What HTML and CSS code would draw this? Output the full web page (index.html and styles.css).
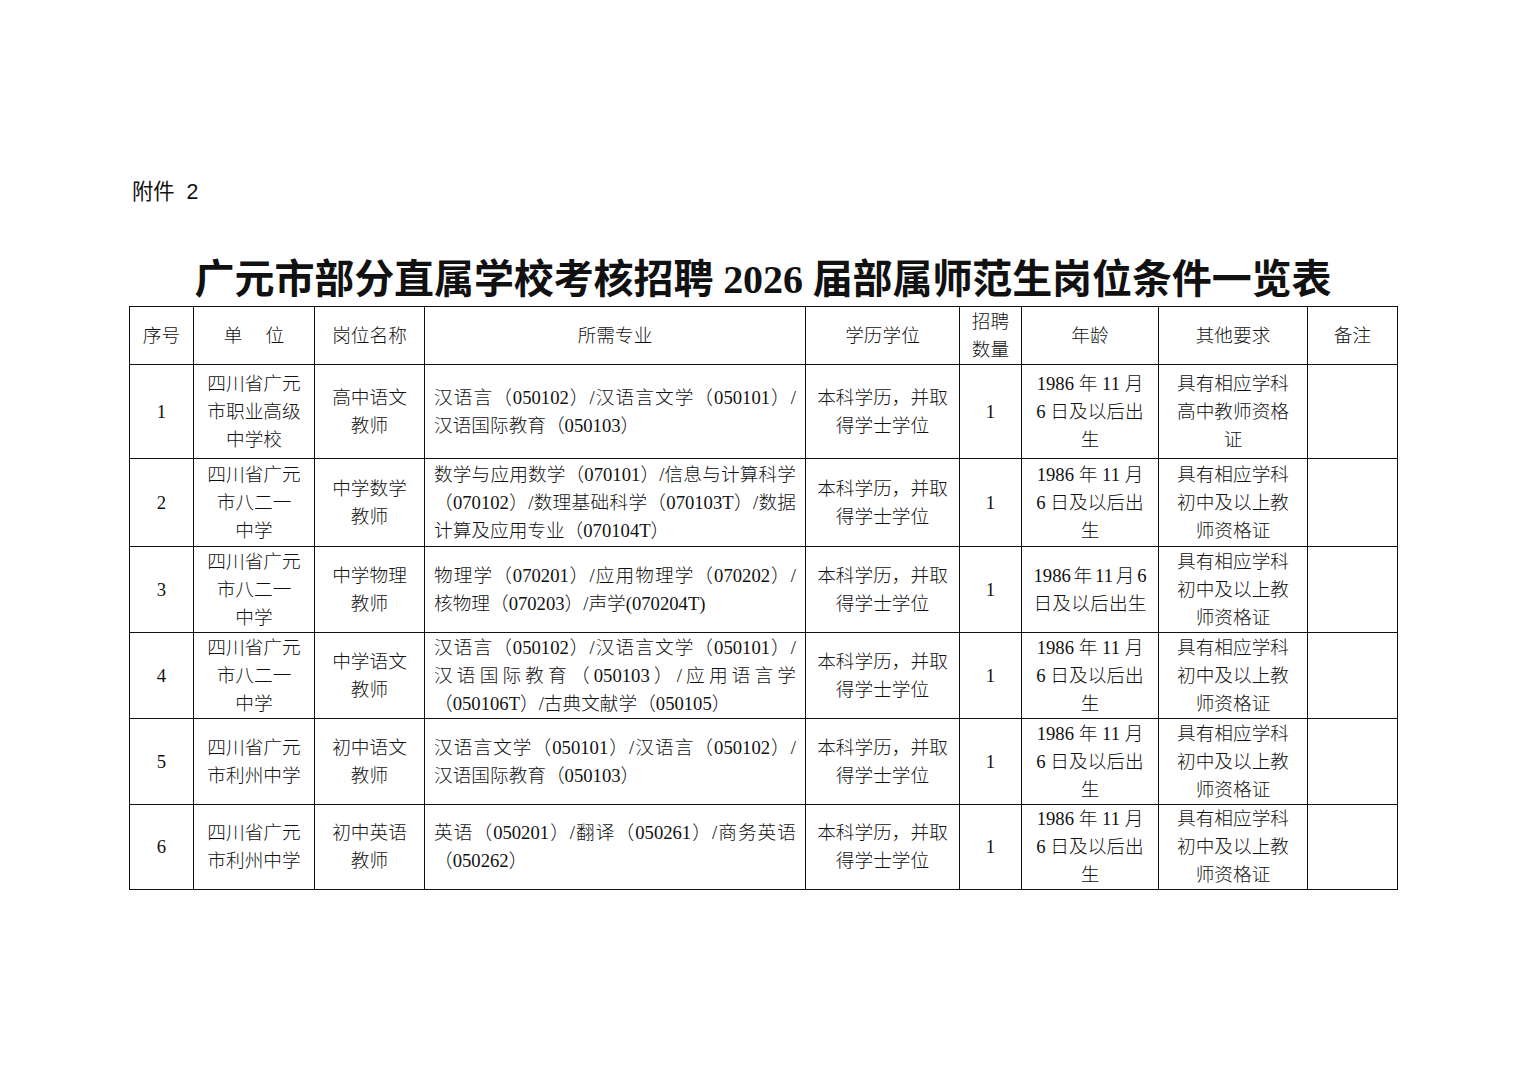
FILE: index.html
```html
<!DOCTYPE html>
<html lang="zh-CN">
<head>
<meta charset="utf-8">
<title>广元市部分直属学校考核招聘2026届部属师范生岗位条件一览表</title>
<link rel="stylesheet" href="styles.css">
</head>
<body>
<div class="page">
  <div class="attach">附件 2</div>
  <h1 class="title">广元市部分直属学校考核招聘 2026 届部属师范生岗位条件一览表</h1>
  <table class="grid">
    <colgroup>
      <col class="c-no"><col class="c-unit"><col class="c-post"><col class="c-major"><col class="c-edu"><col class="c-num"><col class="c-age"><col class="c-other"><col class="c-note">
    </colgroup>
    <tr class="rh">
      <td>序号</td>
      <td>单<span class="gap"></span>位</td>
      <td>岗位名称</td>
      <td>所需专业</td>
      <td>学历学位</td>
      <td>招聘<br>数量</td>
      <td>年龄</td>
      <td>其他要求</td>
      <td>备注</td>
    </tr>
    <tr class="r1">
      <td>1</td>
      <td>四川省广元<br>市职业高级<br>中学校</td>
      <td>高中语文<br>教师</td>
      <td class="major"><span class="ln j">汉语言（050102）/汉语言文学（050101）/</span><span class="ln">汉语国际教育（050103）</span></td>
      <td>本科学历，并取<br>得学士学位</td>
      <td>1</td>
      <td>1986 年 11 月<br>6 日及以后出<br>生</td>
      <td>具有相应学科<br>高中教师资格<br>证</td>
      <td></td>
    </tr>
    <tr class="r2">
      <td>2</td>
      <td>四川省广元<br>市八二一<br>中学</td>
      <td>中学数学<br>教师</td>
      <td class="major"><span class="ln j">数学与应用数学（070101）/信息与计算科学</span><span class="ln j">（070102）/数理基础科学（070103T）/数据</span><span class="ln">计算及应用专业（070104T）</span></td>
      <td>本科学历，并取<br>得学士学位</td>
      <td>1</td>
      <td>1986 年 11 月<br>6 日及以后出<br>生</td>
      <td>具有相应学科<br>初中及以上教<br>师资格证</td>
      <td></td>
    </tr>
    <tr class="r3">
      <td>3</td>
      <td>四川省广元<br>市八二一<br>中学</td>
      <td>中学物理<br>教师</td>
      <td class="major"><span class="ln j">物理学（070201）/应用物理学（070202）/</span><span class="ln">核物理（070203）/声学(070204T)</span></td>
      <td>本科学历，并取<br>得学士学位</td>
      <td>1</td>
      <td><span class="dist"><span class="ln j">1986年11月6</span><span class="ln j">日及以后出生</span></span></td>
      <td>具有相应学科<br>初中及以上教<br>师资格证</td>
      <td></td>
    </tr>
    <tr class="r4">
      <td>4</td>
      <td>四川省广元<br>市八二一<br>中学</td>
      <td>中学语文<br>教师</td>
      <td class="major"><span class="ln j">汉语言（050102）/汉语言文学（050101）/</span><span class="ln j">汉语国际教育（050103）/应用语言学</span><span class="ln">（050106T）/古典文献学（050105）</span></td>
      <td>本科学历，并取<br>得学士学位</td>
      <td>1</td>
      <td>1986 年 11 月<br>6 日及以后出<br>生</td>
      <td>具有相应学科<br>初中及以上教<br>师资格证</td>
      <td></td>
    </tr>
    <tr class="r5">
      <td>5</td>
      <td>四川省广元<br>市利州中学</td>
      <td>初中语文<br>教师</td>
      <td class="major"><span class="ln j">汉语言文学（050101）/汉语言（050102）/</span><span class="ln">汉语国际教育（050103）</span></td>
      <td>本科学历，并取<br>得学士学位</td>
      <td>1</td>
      <td>1986 年 11 月<br>6 日及以后出<br>生</td>
      <td>具有相应学科<br>初中及以上教<br>师资格证</td>
      <td></td>
    </tr>
    <tr class="r6">
      <td>6</td>
      <td>四川省广元<br>市利州中学</td>
      <td>初中英语<br>教师</td>
      <td class="major"><span class="ln j">英语（050201）/翻译（050261）/商务英语</span><span class="ln">（050262）</span></td>
      <td>本科学历，并取<br>得学士学位</td>
      <td>1</td>
      <td>1986 年 11 月<br>6 日及以后出<br>生</td>
      <td>具有相应学科<br>初中及以上教<br>师资格证</td>
      <td></td>
    </tr>
  </table>
</div>
</body>
</html>
```
FILE: styles.css
```css
html, body {
  margin: 0;
  padding: 0;
  background: #ffffff;
}
body {
  color: #111111;
  font-family: "Liberation Serif", "Noto Sans CJK SC", serif;
}
.page {
  width: 1268px;
  margin: 0 0 0 129px;
  padding-top: 178px;
}
.attach {
  font-family: "Liberation Sans", "Noto Sans CJK SC", sans-serif;
  font-size: 21.33px;
  line-height: 28px;
  height: 28px;
  padding-left: 3px;
  word-spacing: 6px;
}
.title {
  margin: 50px 0 2px 0;
  font-family: "Liberation Serif", "Noto Sans CJK SC", serif;
  font-weight: bold;
  font-size: 40px;
  line-height: 48px;
  text-align: center;
  white-space: nowrap;
  letter-spacing: -0.1px;
}
.grid {
  width: 1268px;
  table-layout: fixed;
  border-collapse: collapse;
  font-size: 18.67px;
  font-weight: 300;
  line-height: 28px;
}
.grid td {
  border: 1px solid #111111;
  padding: 0 6px;
  text-align: center;
  vertical-align: middle;
  white-space: nowrap;
  overflow: hidden;
}
.c-no { width: 64px; }
.c-unit { width: 121px; }
.c-post { width: 110px; }
.c-major { width: 381px; }
.c-edu { width: 154px; }
.c-num { width: 62px; }
.c-age { width: 137px; }
.c-other { width: 149px; }
.c-note { width: 90px; }
.rh { height: 58px; }
.r1 { height: 94px; }
.r2 { height: 88px; }
.r3 { height: 86px; }
.r4 { height: 86px; }
.r5 { height: 86px; }
.r6 { height: 85px; }
.grid td.major {
  text-align: left;
  padding: 0 9px;
}
.ln {
  display: block;
}
.ln.j {
  text-align: justify;
  text-align-last: justify;
}
.dist {
  display: inline-block;
  width: 113px;
  vertical-align: middle;
}
.gap {
  display: inline-block;
  width: 23px;
}
```
